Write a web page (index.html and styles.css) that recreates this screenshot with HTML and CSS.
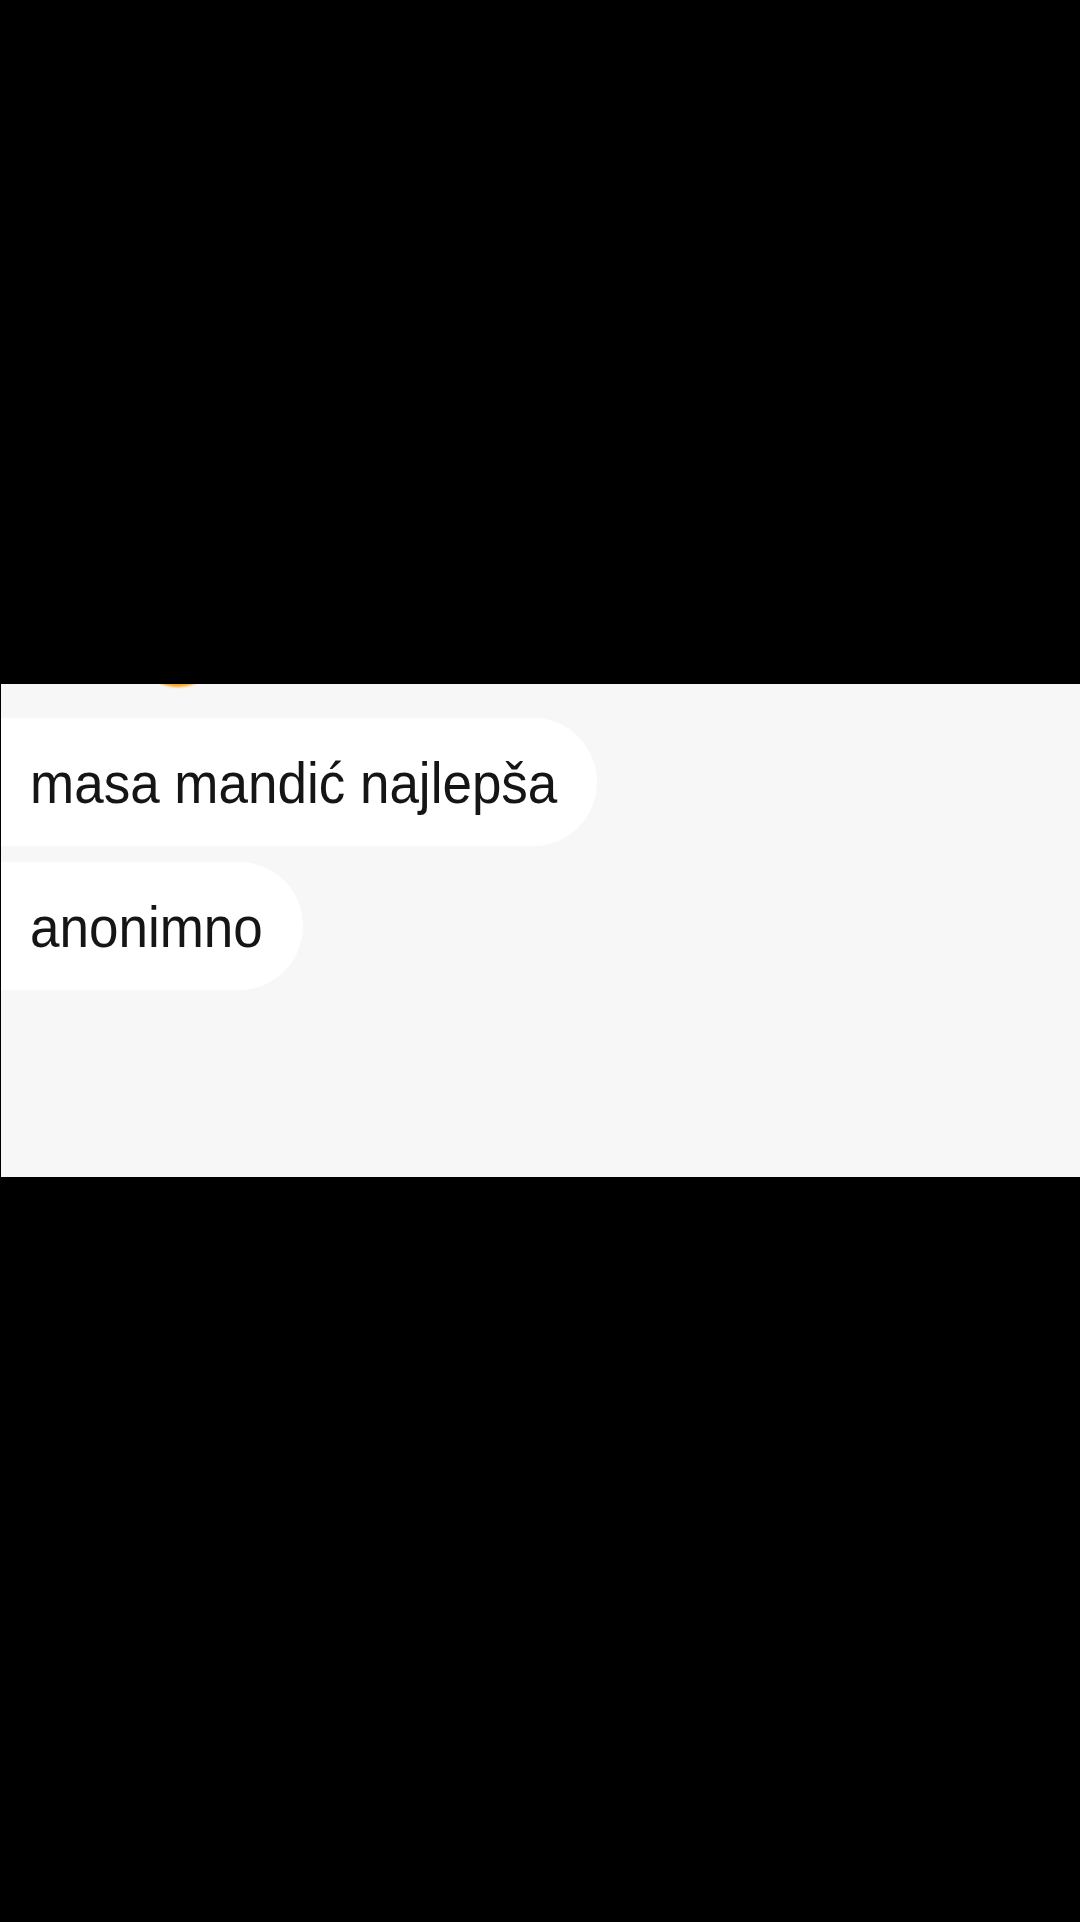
FILE: index.html
```html
<!DOCTYPE html>
<html lang="sr">
<head>
<meta charset="utf-8">
<title>Poruke</title>
<link rel="stylesheet" href="styles.css">
</head>
<body>
<div class="top-black"></div>
<section class="chat">
  <div class="avatar"></div>
  <div class="bubble first"><span class="msg">masa mandić najlepša</span></div>
  <div class="bubble"><span class="msg">anonimno</span></div>
</section>
</body>
</html>
```

FILE: styles.css
```css
html, body {
  margin: 0;
  padding: 0;
  background: #000;
}
body {
  width: 1080px;
  height: 1922px;
  overflow: hidden;
  font-family: "Liberation Sans", Arial, sans-serif;
}
.top-black {
  height: 684px;
}
.chat {
  margin-left: 1px;
  height: 493px;
  background: #f7f7f7;
  overflow: hidden;
  display: flex;
  flex-direction: column;
  align-items: flex-start;
  gap: 16px;
}
.avatar {
  width: 90px;
  height: 90px;
  border-radius: 50%;
  background: #f2a62a;
  margin-top: -87px;
  margin-left: 132px;
  margin-bottom: 15px;
  filter: blur(1px);
}
.bubble {
  box-sizing: border-box;
  height: 128px;
  display: flex;
  align-items: center;
  padding: 0 40px 0 29px;
  background: #fff;
  border-radius: 0 64px 64px 0;
  color: #151515;
  font-size: 53px;
  white-space: nowrap;
}
.msg {
  display: inline-block;
  transform: scale(1, 1.1);
}
```
